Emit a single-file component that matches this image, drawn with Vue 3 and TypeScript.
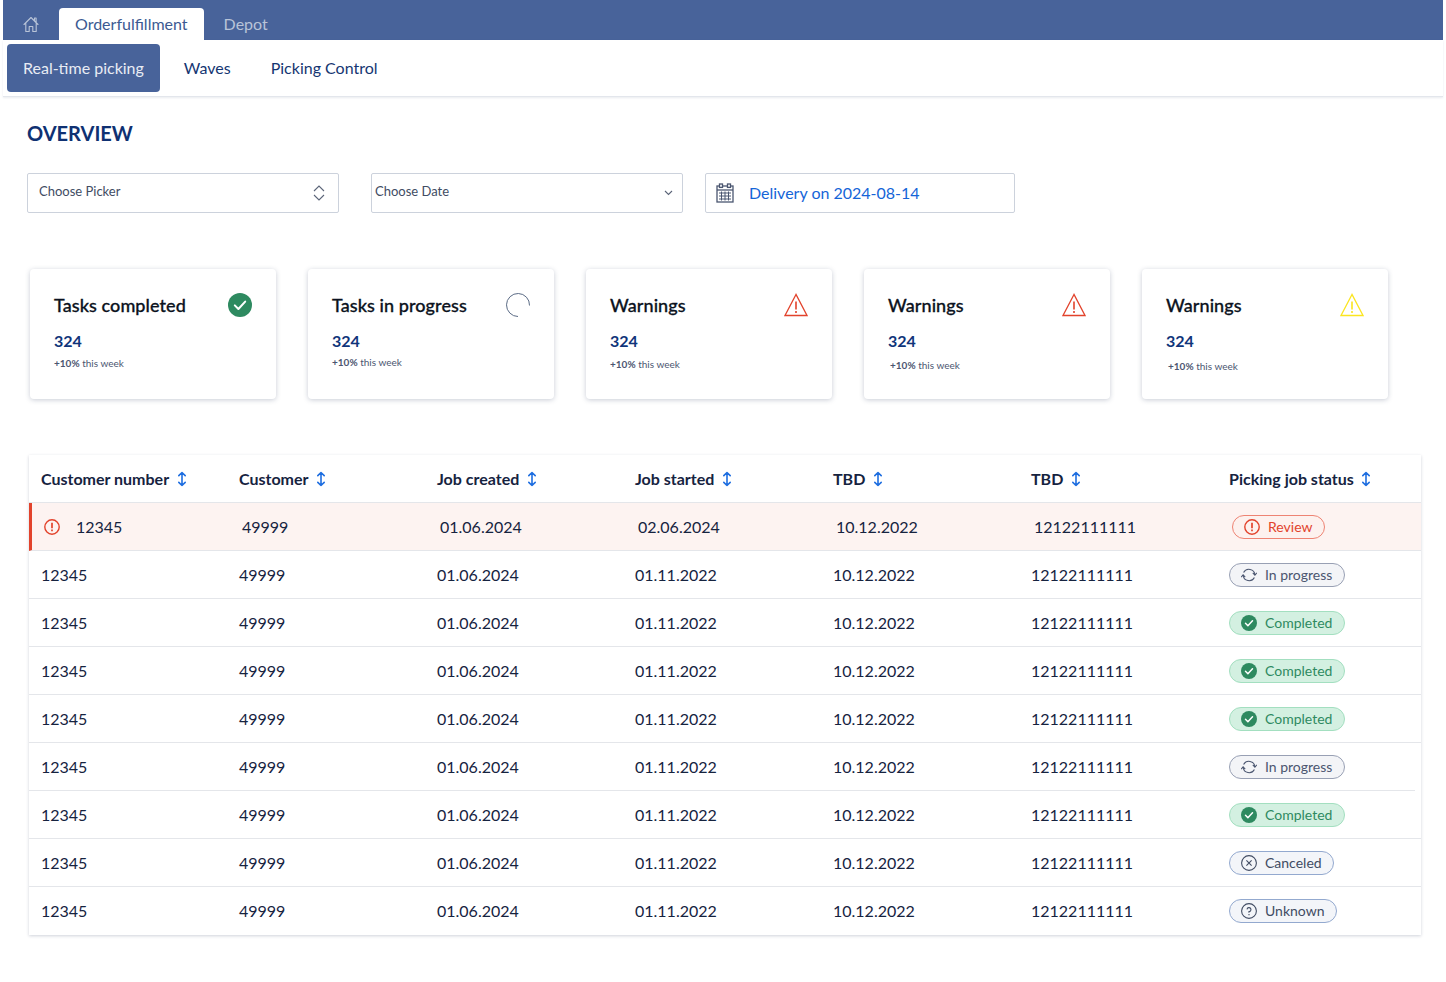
<script setup lang="ts">
type Status = 'review' | 'progress' | 'completed' | 'canceled' | 'unknown'
interface Row { started: string; status: Status; label: string; flagged?: boolean; shortRule?: boolean }
const columns = ['Customer number', 'Customer', 'Job created', 'Job started', 'TBD', 'TBD', 'Picking job status']
const rows: Row[] = [
  { started: '02.06.2024', status: 'review', label: 'Review', flagged: true },
  { started: '01.11.2022', status: 'progress', label: 'In progress' },
  { started: '01.11.2022', status: 'completed', label: 'Completed' },
  { started: '01.11.2022', status: 'completed', label: 'Completed' },
  { started: '01.11.2022', status: 'completed', label: 'Completed' },
  { started: '01.11.2022', status: 'progress', label: 'In progress', shortRule: true },
  { started: '01.11.2022', status: 'completed', label: 'Completed' },
  { started: '01.11.2022', status: 'canceled', label: 'Canceled' },
  { started: '01.11.2022', status: 'unknown', label: 'Unknown' },
]
const cards = [
  { title: 'Tasks completed', icon: 'check', subTop: 6, subLeft: 0 },
  { title: 'Tasks in progress', icon: 'spin', subTop: 5, subLeft: 0 },
  { title: 'Warnings', icon: 'red', subTop: 7, subLeft: 0 },
  { title: 'Warnings', icon: 'red', subTop: 8, subLeft: 2 },
  { title: 'Warnings', icon: 'yellow', subTop: 9, subLeft: 2 },
]
</script>

<template>
  <div class="page">
    <header class="topbar">
      <span class="home">
        <svg width="16" height="17" viewBox="0 0 16 17" fill="none" stroke="#b9c4d8" stroke-width="1.1" stroke-linejoin="round" stroke-linecap="round">
          <path d="M1 8.5 8 1.5l7 7M2.8 7v8.5h3.4v-5h3.6v5h3.4V7M11.5 4.5V2h1.6v4" />
        </svg>
      </span>
      <span class="tab active">Orderfulfillment</span>
      <span class="tab">Depot</span>
    </header>
    <nav class="subnav">
      <span class="sub on">Real-time picking</span>
      <span class="sub">Waves</span>
      <span class="sub">Picking Control</span>
    </nav>

    <main class="content">
      <h1>OVERVIEW</h1>
      <div class="filters">
        <div class="field picker">
          <span class="lift">Choose Picker</span>
          <svg width="12" height="16" viewBox="0 0 12 16" fill="none" stroke="#5b6478" stroke-width="1.1"><path d="M1 6l5-5 5 5M1 10l5 5 5-5" /></svg>
        </div>
        <div class="field date">
          <span class="lift">Choose Date</span>
          <svg width="9" height="6" viewBox="0 0 9 6" fill="none" stroke="#5b6478" stroke-width="1.1"><path d="M1 1l3.5 3.5L8 1" /></svg>
        </div>
        <div class="field delivery">
          <svg width="18" height="20" viewBox="0 0 18 20" fill="none" stroke="#4b5670" stroke-width="1.3">
            <rect x="1" y="3" width="16" height="16" />
            <path d="M1 7h16" />
            <rect x="3.5" y="1" width="3" height="3.4" fill="#fff" />
            <rect x="11.5" y="1" width="3" height="3.4" fill="#fff" />
            <path d="M3 10h12M3 13h12M3 16h12M5.5 8.5v9M9 8.5v9M12.5 8.5v9" stroke-width="1" />
          </svg>
          <span class="lift-one">Delivery on 2024-08-14</span>
        </div>
      </div>

      <section class="cards">
        <article v-for="(c, i) in cards" :key="i" class="card">
          <div class="card-head">
            <h2>{{ c.title }}</h2>
            <svg v-if="c.icon === 'check'" width="24" height="24" viewBox="0 0 24 24">
              <circle cx="12" cy="12" r="12" fill="#2e8a60" />
              <path d="M6.8 12.4l3.6 3.6 6.8-7.4" fill="none" stroke="#fff" stroke-width="2" stroke-linecap="round" stroke-linejoin="round" />
            </svg>
            <svg v-else-if="c.icon === 'spin'" width="24" height="24" viewBox="0 0 24 24" fill="none" stroke="#5b6b85" stroke-width="1">
              <path d="M12 23.5A11.5 11.5 0 1 1 23.5 12.5" />
            </svg>
            <svg v-else width="24" height="24" viewBox="0 0 24 24" fill="none" :stroke="c.icon === 'red' ? '#e2432c' : '#fbe520'" stroke-width="1.3">
              <path d="M12 1.5 1 22.5h22z" stroke-linejoin="miter" />
              <path d="M12 8.5v8M12 18v2" stroke-width="1.6" />
            </svg>
          </div>
          <div class="num">324</div>
          <div class="trend" :style="{ marginTop: c.subTop + 'px', marginLeft: c.subLeft + 'px' }"><b>+10%</b> this week</div>
        </article>
      </section>

      <section class="table">
        <div class="tr head">
          <div v-for="(c, i) in columns" :key="i" class="th">
            {{ c }}
            <svg width="10" height="16" viewBox="0 0 10 16" fill="none" stroke="#1e6ee0" stroke-width="1.6" stroke-linecap="round" stroke-linejoin="round">
              <path d="M5 1.5v13M1.8 4.6 5 1.5l3.2 3.1M1.8 11.4 5 14.5l3.2-3.1" />
            </svg>
          </div>
        </div>
        <div v-for="(r, i) in rows" :key="i" class="tr" :class="{ flagged: r.flagged, short: r.shortRule }">
          <div class="td first">
            <svg v-if="r.flagged" class="flag" width="16" height="16" viewBox="0 0 16 16" fill="none" stroke="#e2432c" stroke-width="1.4">
              <circle cx="8" cy="8" r="7.2" /><path d="M8 3.8v5.4M8 10.6v1.6" stroke-width="1.7" />
            </svg>
            12345
          </div>
          <div class="td">49999</div>
          <div class="td">01.06.2024</div>
          <div class="td">{{ r.started }}</div>
          <div class="td">10.12.2022</div>
          <div class="td">12122111111</div>
          <div class="td">
            <span class="pill" :class="r.status">
              <svg v-if="r.status === 'review'" width="16" height="16" viewBox="0 0 16 16" fill="none" stroke="currentColor" stroke-width="1.4">
                <circle cx="8" cy="8" r="7.2" /><path d="M8 3.8v5.4M8 10.6v1.6" stroke-width="1.7" />
              </svg>
              <svg v-else-if="r.status === 'progress'" width="16" height="16" viewBox="0 0 16 16" fill="none" stroke="currentColor" stroke-width="1.1">
                <path d="M2.6 5.6A6 6 0 0 1 13.9 7.8" />
                <path d="M13.4 10.4A6 6 0 0 1 2.1 8.2" />
                <path d="M11.8 5.9 13.9 8.2 15.9 5.9M.1 10.1 2.1 7.8 4.2 10.1" />
              </svg>
              <svg v-else-if="r.status === 'completed'" width="16" height="16" viewBox="0 0 16 16">
                <circle cx="8" cy="8" r="8" fill="#2e8a60" />
                <path d="M4.5 8.3l2.4 2.4 4.6-5" fill="none" stroke="#fff" stroke-width="1.5" stroke-linecap="round" stroke-linejoin="round" />
              </svg>
              <svg v-else-if="r.status === 'canceled'" width="16" height="16" viewBox="0 0 16 16" fill="none" stroke="currentColor" stroke-width="1.1">
                <circle cx="8" cy="8" r="7.4" /><path d="M5.4 5.4l5.2 5.2M10.6 5.4l-5.2 5.2" />
              </svg>
              <svg v-else width="16" height="16" viewBox="0 0 16 16" fill="none" stroke="currentColor" stroke-width="1.1">
                <circle cx="8" cy="8" r="7.4" />
                <path d="M6 6.3A2 2 0 1 1 8 8.6v1.2M8 11v1.2" />
              </svg>
              {{ r.label }}
            </span>
          </div>
        </div>
      </section>
    </main>
  </div>
</template>

<style>
html, body { margin: 0; background: #fff; }
</style>

<style scoped>
.page { width: 1446px; min-height: 982px; font-family: Lato, "Noto Sans", sans-serif; color: #16233f; background: #fff; }
.topbar { height: 40px; margin: 0 3px; background: #48639a; display: flex; align-items: flex-end; }
.home { width: 56px; height: 32px; display: flex; align-items: center; justify-content: center; }
.tab { height: 32px; line-height: 31px; padding: 0 20px; font-size: 16px; color: #b9c4d8; }
.tab.active { padding: 0 16px; background: #fff; color: #3c5a92; border-radius: 4px 4px 0 0; }
.subnav { height: 57px; margin: 0 3px; padding: 4px 4px; box-sizing: border-box; display: flex; gap: 8px; background: #fff; border-bottom: 1px solid #e3e6ec; box-shadow: 0 1px 2px rgba(40, 60, 100, .1); }
.sub { height: 48px; line-height: 48px; padding: 0 16px; font-size: 16px; color: #153672; border-radius: 4px; }
.sub.on { background: #48639a; color: #e8ecf4; }
.content { padding: 0 0 0 27px; }
h1 { margin: 0; padding-top: 23px; height: 29px; line-height: 26px; font-size: 20px; font-weight: 700; color: #0f3172; box-sizing: content-box; }
.filters { display: flex; margin-top: 24px; height: 40px; }
.field { box-sizing: border-box; height: 40px; border: 1px solid #ccd2dc; border-radius: 2px; display: flex; align-items: center; font-size: 13px; color: #414c63; background: #fff; }
.lift { margin-bottom: 4px; }
.lift-one { margin-bottom: 2px; }
.picker { width: 312px; padding: 0 13px 0 11px; justify-content: space-between; }
.date { width: 312px; margin-left: 32px; padding: 0 9px 0 3px; justify-content: space-between; }
.delivery { width: 310px; margin-left: 22px; padding: 0 10px; gap: 15px; font-size: 16px; color: #1565d8; }
.cards { display: flex; gap: 32px; margin: 56px 0 0 3px; }
.card { box-sizing: border-box; width: 246px; height: 130px; padding: 24px 24px 0; border-radius: 4px; background: #fff; box-shadow: 0 1px 5px rgba(40, 55, 90, .25); }
.card-head { display: flex; align-items: center; justify-content: space-between; height: 24px; }
h2 { margin: 0; font-size: 18px; font-weight: 500; letter-spacing: .08px; color: #0b1220; -webkit-text-stroke: .3px #0b1220; }
.num { margin-top: 14px; height: 20px; line-height: 20px; font-size: 16px; font-weight: 700; color: #10357a; }
.trend { font-size: 10px; line-height: 12px; color: #4b5670; }
.trend b { font-weight: 700; }
.table { width: 1392px; margin: 56px 0 0 2px; background: #fff; box-shadow: 0 1px 3px rgba(40, 55, 90, .22); }
.tr { display: grid; grid-template-columns: repeat(6, 198px) 1fr; height: 48px; box-sizing: border-box; padding-left: 12px; align-items: center; border-bottom: 1px solid #e4e6ea; position: relative; font-size: 16px; }
.tr:last-child { border-bottom-color: transparent; }
.tr.short { border-bottom-color: transparent; }
.tr.short::after { content: ""; position: absolute; left: 0; right: 6px; bottom: -1px; height: 1px; background: #e4e6ea; }
.tr.flagged { background: #fdf3f1; border-left: 3px solid #e2432c; }
.th { display: flex; align-items: center; gap: 7.6px; font-weight: 700; font-size: 16px; color: #16233f; }
.first { display: flex; align-items: center; }
.flag { margin-right: 16px; }
.pill { display: inline-flex; align-items: center; gap: 8px; height: 24px; box-sizing: border-box; padding: 0 12px 0 11px; border: 1px solid; border-radius: 12px; font-size: 14px; }
.review { color: #e2432c; background: #fdf1ee; border-color: #ee8373; }
.progress { color: #4b5670; background: #f3f4f7; border-color: #98a0b4; }
.completed { color: #2e8a60; background: #d3f0e1; border-color: #a3dfc0; }
.canceled { padding: 0 11px; }
.canceled, .unknown { color: #414c63; background: #f3f5f9; border-color: #93a9cf; }
</style>
